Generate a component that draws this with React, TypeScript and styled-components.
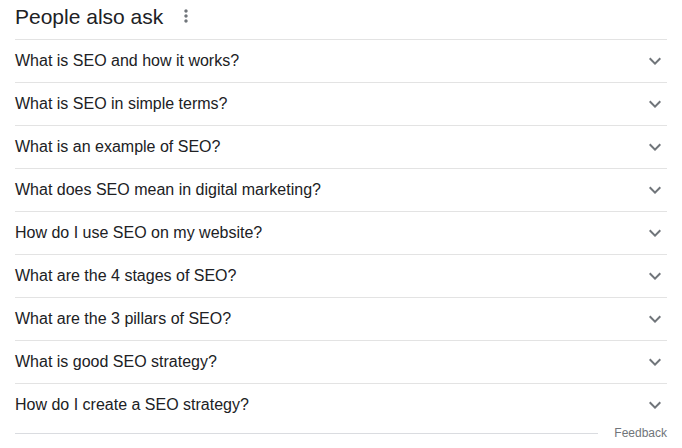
import React from 'react'
import styled, { createGlobalStyle } from 'styled-components'

const questions = [
    'What is SEO and how it works?',
    'What is SEO in simple terms?',
    'What is an example of SEO?',
    'What does SEO mean in digital marketing?',
    'How do I use SEO on my website?',
    'What are the 4 stages of SEO?',
    'What are the 3 pillars of SEO?',
    'What is good SEO strategy?',
    'How do I create a SEO strategy?',
]

const GlobalStyle = createGlobalStyle`
    body {
        margin: 0;
        background: #fff;
        font-family: Arial, "Liberation Sans", sans-serif;
        color: #202124;
    }
`

const Wrap = styled.div`
    width: 652px;
    padding-left: 15px;
`

const Header = styled.div`
    height: 39px;
    padding-top: 3px;
    box-sizing: border-box;
    display: flex;
    align-items: flex-start;
`

const Title = styled.h2`
    margin: 0;
    font-size: 21px;
    line-height: 28px;
    font-weight: 400;
    color: #202124;
`

const Kebab = styled.svg`
    width: 20px;
    height: 20px;
    margin: 3px 0 0 13px;
    fill: #70757a;
`

const Row = styled.div`
    height: 42px;
    border-top: 1px solid #e3e3e3;
    display: flex;
    align-items: center;
    justify-content: space-between;
`

const Question = styled.span`
    font-size: 16px;
    line-height: 22px;
`

const Chevron = styled.svg`
    width: 24px;
    height: 24px;
    fill: #70757a;
`

const FeedbackRow = styled.div`
    display: flex;
    align-items: center;
    height: 14px;
`

const Line = styled.div`
    flex: 1;
    height: 1px;
    background: #dadce0;
`

const Feedback = styled.span`
    margin-left: 16px;
    font-size: 12px;
    line-height: 14px;
    color: #70757a;
`

export default function App() {
    return (
        <>
            <GlobalStyle />
            <Wrap>
                <Header>
                    <Title>People also ask</Title>
                    <Kebab viewBox="0 0 24 24">
                        <path d="M12 8c1.1 0 2-.9 2-2s-.9-2-2-2-2 .9-2 2 .9 2 2 2zm0 2c-1.1 0-2 .9-2 2s.9 2 2 2 2-.9 2-2-.9-2-2-2zm0 6c-1.1 0-2 .9-2 2s.9 2 2 2 2-.9 2-2-.9-2-2-2z" />
                    </Kebab>
                </Header>
                {questions.map(q => (
                    <Row key={q}>
                        <Question>{q}</Question>
                        <Chevron viewBox="0 0 24 24">
                            <path d="M16.59 8.59 12 13.17 7.41 8.59 6 10l6 6 6-6z" />
                        </Chevron>
                    </Row>
                ))}
                <FeedbackRow>
                    <Line />
                    <Feedback>Feedback</Feedback>
                </FeedbackRow>
            </Wrap>
        </>
    )
}
